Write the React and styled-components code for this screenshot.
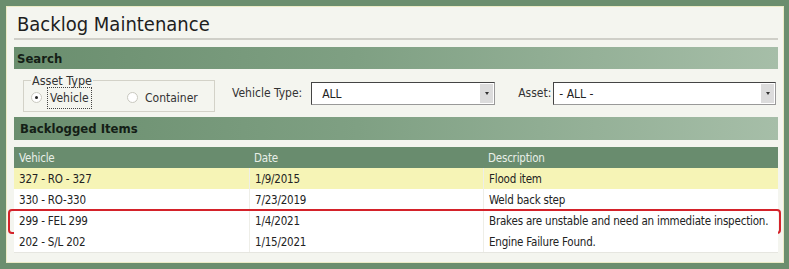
import React from "react";
import styled, { createGlobalStyle } from "styled-components";

const Global = createGlobalStyle`
  html, body { margin: 0; padding: 0; }
  body {
    background: #6b8e6e;
    font-family: "DejaVu Sans Condensed", "DejaVu Sans", sans-serif;
    color: #1e1e1e;
  }
`;

const Page = styled.div`
  padding: 6px 5px 6px 6px;
  height: 269px;
  box-sizing: border-box;
`;

const Panel = styled.div`
  background: #f4f5ef;
  border: 1px solid #ecebc6;
  height: 257px;
  box-sizing: border-box;
  padding: 0 5px 0 7px;
`;

const Title = styled.h1`
  margin: 0;
  font-weight: normal;
  font-size: 20px;
  height: 33px;
  line-height: 30px;
  padding: 2px 0 0 3px;
  border-bottom: 2px solid #cfcfc8;
  box-sizing: border-box;
`;

const SectionBar = styled.div`
  margin-top: ${(p) => p.$top}px;
  height: ${(p) => p.$h}px;
  background: linear-gradient(90deg, #6a8e6e 0%, #7fa083 45%, #a6bea8 100%);
  font-weight: bold;
  font-size: 13px;
  color: #141e16;
  display: flex;
  align-items: center;
  padding-left: ${(p) => p.$pad}px;
`;

const SearchRow = styled.div`
  display: flex;
  align-items: center;
  height: 47px;
`;

const Fieldset = styled.fieldset`
  margin: 0 0 0 9px;
  padding: 0 0 0 7px;
  width: 192px;
  height: 36px;
  box-sizing: border-box;
  border: 1px solid #d3d2c8;
  display: flex;
  align-items: center;
  position: relative;
  top: 1px;
`;

const Legend = styled.legend`
  font-size: 12.5px;
  padding: 0 1px;
  margin-left: 0;
  line-height: 10px;
  color: #333;
`;

const RadioLabel = styled.label`
  display: flex;
  align-items: center;
  font-size: 12px;
  color: #333;
  width: ${(p) => p.$w}px;
  margin-top: -1px;
`;

const RadioCircle = styled.span`
  width: 9px;
  height: 9px;
  border-radius: 50%;
  border: 1px solid #c9c9c0;
  background: #fff;
  position: relative;
  margin-right: 7px;
  &::after {
    content: "";
    display: ${(p) => (p.$on ? "block" : "none")};
    position: absolute;
    left: 3px;
    top: 3px;
    width: 3px;
    height: 3px;
    border-radius: 50%;
    background: #222;
  }
`;

const Focus = styled.span`
  outline: 1px dotted #444;
  outline-offset: 1px;
  padding: 2px 1px;
`;

const FieldLabel = styled.span`
  font-size: 12px;
  color: #333;
  margin-left: ${(p) => p.$ml}px;
  margin-right: ${(p) => p.$mr}px;
`;

const Select = styled.div`
  width: ${(p) => p.$w}px;
  height: 23px;
  box-sizing: border-box;
  border: 1px solid #444;
  border-right-color: #999;
  border-bottom-color: #999;
  background: #fff;
  display: flex;
  align-items: center;
  font-size: 12px;
  color: #222;
  padding-left: ${(p) => p.$pl}px;
  margin-top: 2px;
`;

const SelectText = styled.span`
  flex: 1;
`;

const Arrow = styled.span`
  width: 13px;
  height: 19px;
  margin-right: 1px;
  background: #dcdcdc;
  display: flex;
  align-items: center;
  justify-content: center;
  &::after {
    content: "";
    border-left: 2.5px solid transparent;
    border-right: 2.5px solid transparent;
    border-top: 3px solid #333;
  }
`;

const Table = styled.div`
  margin-top: 7px;
  display: flex;
  flex-direction: column;
  border-bottom: 1px solid #e6e6e0;
`;

const Row = styled.div`
  display: grid;
  grid-template-columns: 235px 234px 1fr;
  height: 21px;
  position: relative;
  background: ${(p) => (p.$head ? "#698c6e" : p.$alt ? "#f6f4b6" : "#ffffff")};
  color: ${(p) => (p.$head ? "#e8efe8" : "#222")};
  &::after {
    content: "";
    display: ${(p) => (p.$flag ? "block" : "none")};
    position: absolute;
    left: -6px;
    right: -3px;
    top: -1px;
    bottom: -3px;
    border: 2px solid #d4222a;
    border-radius: 4px;
    pointer-events: none;
  }
`;

const Cell = styled.div`
  font-size: 11.5px;
  letter-spacing: -0.2px;
  display: flex;
  align-items: center;
  padding-left: 5px;
  white-space: nowrap;
  border-left: ${(p) => (p.$sep ? "1px solid #eeeee8" : "none")};
`;

const rows = [
  ["327 - RO - 327", "1/9/2015", "Flood item"],
  ["330 - RO-330", "7/23/2019", "Weld back step"],
  ["299 - FEL 299", "1/4/2021", "Brakes are unstable and need an immediate inspection."],
  ["202 - S/L 202", "1/15/2021", "Engine Failure Found."],
];

export default function App() {
  return (
    <Page>
      <Global />
      <Panel>
        <Title>Backlog Maintenance</Title>
        <SectionBar $top={7} $h={22} $pad={3}>Search</SectionBar>
        <SearchRow>
          <Fieldset>
            <Legend>Asset Type</Legend>
            <RadioLabel $w={96}>
              <RadioCircle $on />
              <Focus>Vehicle</Focus>
            </RadioLabel>
            <RadioLabel $w={80}>
              <RadioCircle />
              Container
            </RadioLabel>
          </Fieldset>
          <FieldLabel $ml={17} $mr={9}>Vehicle Type:</FieldLabel>
          <Select $w={184} $pl={10}>
            <SelectText>ALL</SelectText>
            <Arrow />
          </Select>
          <FieldLabel $ml={23} $mr={2}>Asset:</FieldLabel>
          <Select $w={223} $pl={5}>
            <SelectText>- ALL -</SelectText>
            <Arrow />
          </Select>
        </SearchRow>
        <SectionBar $top={1} $h={23} $pad={6}>Backlogged Items</SectionBar>
        <Table>
          <Row $head>
            <Cell>Vehicle</Cell>
            <Cell>Date</Cell>
            <Cell>Description</Cell>
          </Row>
          {rows.map((r, i) => (
            <Row key={i} $alt={i === 0} $flag={i === 2}>
              <Cell>{r[0]}</Cell>
              <Cell $sep>{r[1]}</Cell>
              <Cell $sep>{r[2]}</Cell>
            </Row>
          ))}
        </Table>
      </Panel>
    </Page>
  );
}
